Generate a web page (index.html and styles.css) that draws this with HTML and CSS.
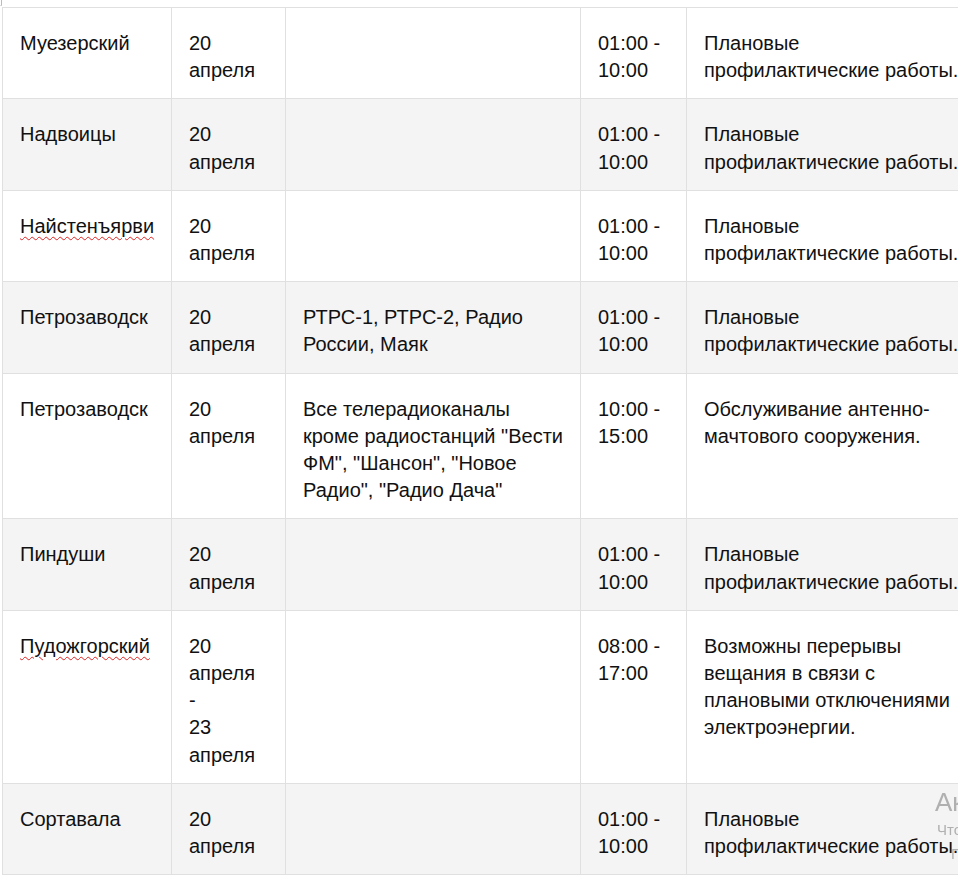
FILE: index.html
```html
<!DOCTYPE html>
<html lang="ru">
<head>
<meta charset="utf-8">
<title>Отключения</title>
<link rel="stylesheet" href="styles.css">
</head>
<body>
<div class="top"><span class="corner"></span></div>
<table class="sched">
<colgroup>
<col class="c1"><col class="c2"><col class="c3"><col class="c4"><col class="c5">
</colgroup>
<tbody>
<tr><td>Муезерский</td><td>20 апреля</td><td></td><td>01:00 - 10:00</td><td class="nw">Плановые<br>профилактические работы.</td></tr>
<tr><td>Надвоицы</td><td>20 апреля</td><td></td><td>01:00 - 10:00</td><td class="nw">Плановые<br>профилактические работы.</td></tr>
<tr><td><span class="spell">Найстенъярви</span></td><td>20 апреля</td><td></td><td>01:00 - 10:00</td><td class="nw">Плановые<br>профилактические работы.</td></tr>
<tr><td>Петрозаводск</td><td>20 апреля</td><td class="wide">РТРС-1, РТРС-2, Радио России, Маяк</td><td>01:00 - 10:00</td><td class="nw">Плановые<br>профилактические работы.</td></tr>
<tr><td>Петрозаводск</td><td>20 апреля</td><td class="wide">Все телерадиоканалы кроме радиостанций "Вести ФМ", "Шансон", "Новое Радио", "Радио Дача"</td><td>10:00 - 15:00</td><td>Обслуживание антенно-мачтового сооружения.</td></tr>
<tr><td>Пиндуши</td><td>20 апреля</td><td></td><td>01:00 - 10:00</td><td class="nw">Плановые<br>профилактические работы.</td></tr>
<tr><td><span class="spell">Пудожгорский</span></td><td>20 апреля<br>-<br>23 апреля</td><td></td><td>08:00 - 17:00</td><td>Возможны перерывы вещания в связи с плановыми отключениями электроэнергии.</td></tr>
<tr><td>Сортавала</td><td>20 апреля</td><td></td><td>01:00 - 10:00</td><td class="nw">Плановые<br>профилактические работы.</td></tr>
</tbody>
</table>
<div class="activate">
<div class="a1">Активация Windows</div>
<div class="a2">Чтобы активировать Windows, перейдите в</div>
<div class="a3">Параметры</div>
</div>
</body>
</html>
```
FILE: styles.css
```css
html, body {
  margin: 0;
  padding: 0;
  background: #fff;
  overflow: hidden;
}
body {
  font-family: "Liberation Sans", Arial, sans-serif;
  color: #111;
}
.top {
  height: 7px;
}
.corner {
  display: block;
  width: 1px;
  height: 5px;
  border-right: 1px solid #bbb;
  border-bottom: 1px solid #ddd;
}
.sched {
  border-collapse: collapse;
  table-layout: fixed;
  width: 985px;
  margin-left: 2px;
  font-size: 20px;
  line-height: 27.2px;
}
.c1 { width: 169px; }
.c2 { width: 114px; }
.c3 { width: 295px; }
.c4 { width: 106px; }
.c5 { width: 301px; }
.sched td {
  border: 1px solid #e0e0e0;
  padding: 22px 18px 14px 17px;
  vertical-align: top;
}
.sched td.wide {
  padding-right: 14px;
}
.sched td.nw {
  white-space: nowrap;
}
.sched tr:nth-child(even) td {
  background: #f4f4f4;
}
.spell {
  text-decoration: underline wavy #d22;
  text-decoration-thickness: 1px;
  text-underline-offset: 3px;
}
.activate {
  position: fixed;
  left: 935px;
  top: 786px;
  width: 400px;
  color: rgba(120, 120, 120, 0.55);
  font-family: "Liberation Sans", Arial, sans-serif;
  white-space: nowrap;
  pointer-events: none;
}
.a1 {
  font-size: 26px;
  line-height: 32px;
}
.a2 {
  font-size: 15px;
  line-height: 24px;
  margin-left: 2px;
}
.a3 {
  font-size: 15px;
  line-height: 24px;
  margin-left: 16px;
}
```
